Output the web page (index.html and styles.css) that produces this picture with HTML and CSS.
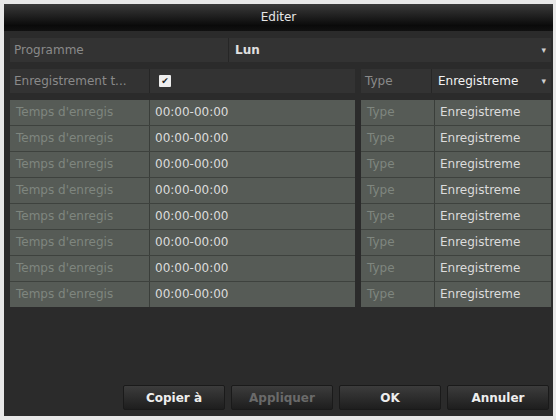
FILE: index.html
```html
<!DOCTYPE html>
<html lang="fr">
<head>
    <meta charset="UTF-8">
    <title>Editer</title>
    <link rel="stylesheet" href="styles.css">
</head>
<body>
    <div class="window">
        <div class="titlebar">Editer</div>
        <div class="content">
            <div class="field-row">
                <div class="label wide">Programme</div>
                <div class="value select">
                    <span class="strong">Lun</span>
                    <span class="arrow">&#9662;</span>
                </div>
            </div>

            <div class="split">
                <div class="left">
                    <div class="field-row">
                        <div class="label">Enregistrement t...</div>
                        <div class="value"><span class="check">&#10004;</span></div>
                    </div>
                    <div class="table">
                        <div class="trow"><div class="tlabel">Temps d'enregis</div><div class="tval">00:00-00:00</div></div>
                        <div class="trow"><div class="tlabel">Temps d'enregis</div><div class="tval">00:00-00:00</div></div>
                        <div class="trow"><div class="tlabel">Temps d'enregis</div><div class="tval">00:00-00:00</div></div>
                        <div class="trow"><div class="tlabel">Temps d'enregis</div><div class="tval">00:00-00:00</div></div>
                        <div class="trow"><div class="tlabel">Temps d'enregis</div><div class="tval">00:00-00:00</div></div>
                        <div class="trow"><div class="tlabel">Temps d'enregis</div><div class="tval">00:00-00:00</div></div>
                        <div class="trow"><div class="tlabel">Temps d'enregis</div><div class="tval">00:00-00:00</div></div>
                        <div class="trow"><div class="tlabel">Temps d'enregis</div><div class="tval">00:00-00:00</div></div>
                    </div>
                </div>
                <div class="right">
                    <div class="field-row">
                        <div class="label type">Type</div>
                        <div class="value select">
                            <span class="bright">Enregistreme</span>
                            <span class="arrow">&#9662;</span>
                        </div>
                    </div>
                    <div class="table">
                        <div class="trow"><div class="tlabel type">Type</div><div class="tval">Enregistreme</div></div>
                        <div class="trow"><div class="tlabel type">Type</div><div class="tval">Enregistreme</div></div>
                        <div class="trow"><div class="tlabel type">Type</div><div class="tval">Enregistreme</div></div>
                        <div class="trow"><div class="tlabel type">Type</div><div class="tval">Enregistreme</div></div>
                        <div class="trow"><div class="tlabel type">Type</div><div class="tval">Enregistreme</div></div>
                        <div class="trow"><div class="tlabel type">Type</div><div class="tval">Enregistreme</div></div>
                        <div class="trow"><div class="tlabel type">Type</div><div class="tval">Enregistreme</div></div>
                        <div class="trow"><div class="tlabel type">Type</div><div class="tval">Enregistreme</div></div>
                    </div>
                </div>
            </div>
        </div>

        <div class="buttons">
            <button class="btn">Copier à</button>
            <button class="btn disabled">Appliquer</button>
            <button class="btn">OK</button>
            <button class="btn">Annuler</button>
        </div>
    </div>
</body>
</html>
```

FILE: styles.css
```css
html, body {
    margin: 0;
    padding: 0;
}

body {
    width: 556px;
    height: 420px;
    background: #e8e8e8;
    font-family: "DejaVu Sans", Verdana, sans-serif;
    font-size: 12px;
    overflow: hidden;
}

.window {
    margin: 4px 3px 0 4px;
    height: 412px;
    background: #2b2b2b;
    display: flex;
    flex-direction: column;
}

.titlebar {
    height: 27px;
    line-height: 27px;
    text-align: center;
    color: #e6e6e6;
    font-size: 12px;
    background: linear-gradient(to bottom, #3a3a3a, #0a0a0a 80%, #111);
}

.content {
    padding: 7px 2px 0 6px;
    flex: 1;
}

.field-row {
    display: flex;
    height: 24px;
    margin-bottom: 7px;
}

.label {
    width: 135px;
    background: #333;
    color: #8a8a8a;
    padding-left: 4px;
    line-height: 24px;
    border-right: 1px solid #262626;
    white-space: nowrap;
    overflow: hidden;
}

.label.wide {
    width: 214px;
}

.label.type {
    width: 66px;
}

.value {
    flex: 1;
    background: #333;
    color: #e0e0e0;
    line-height: 24px;
    padding-left: 6px;
    display: flex;
    align-items: center;
}

.select {
    justify-content: space-between;
    padding-right: 5px;
}

.strong {
    font-weight: bold;
}

.bright {
    color: #f2f2f2;
    white-space: nowrap;
}

.arrow {
    font-size: 9px;
    color: #cfcfcf;
}

.check {
    display: inline-flex;
    align-items: center;
    justify-content: center;
    width: 12px;
    height: 12px;
    background: #eee;
    color: #222;
    font-size: 9px;
    font-weight: bold;
    border-radius: 1px;
    margin-left: 3px;
}

.split {
    display: flex;
    gap: 6px;
}

.left {
    width: 345px;
}

.right {
    flex: 1;
}

.table {
    background: #565b56;
}

.trow {
    display: flex;
    height: 25px;
    border-bottom: 1px solid #3e423e;
}

.trow:last-child {
    border-bottom: none;
}

.tlabel {
    width: 133px;
    padding-left: 6px;
    color: #7f867f;
    line-height: 25px;
    border-right: 1px solid #3a3e3a;
    white-space: nowrap;
    overflow: hidden;
}

.tlabel.type {
    width: 67px;
}

.tval {
    flex: 1;
    padding-left: 5px;
    color: #dcdcdc;
    line-height: 25px;
    white-space: nowrap;
}

.buttons {
    display: flex;
    justify-content: flex-end;
    gap: 6px;
    padding: 0 4px 6px 0;
}

.btn {
    width: 102px;
    height: 25px;
    border: 1px solid #1a1a1a;
    background: linear-gradient(to bottom, #3c3c3c, #1e1e1e);
    color: #eeeeee;
    font-family: "DejaVu Sans", Verdana, sans-serif;
    font-size: 12px;
    font-weight: bold;
    border-radius: 2px;
}

.btn.disabled {
    color: #6a6a6a;
}
```
